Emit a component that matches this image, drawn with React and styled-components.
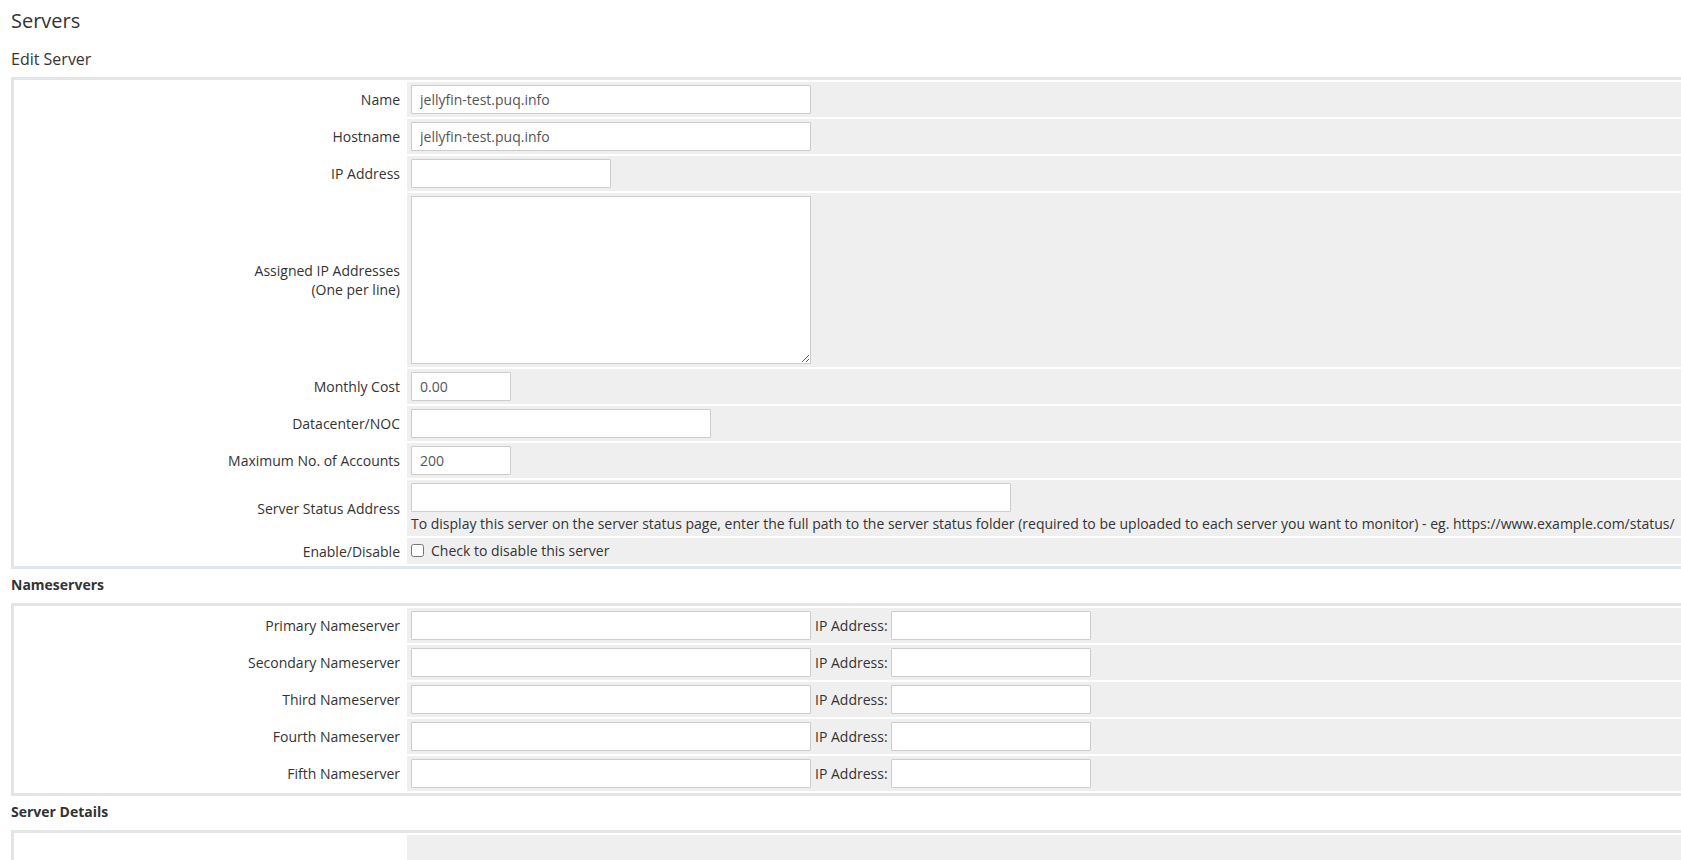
import React from "react";
import styled, { createGlobalStyle } from "styled-components";

const Global = createGlobalStyle`
  html, body { margin: 0; padding: 0; overflow: hidden; background: #fff; }
  body { font-family: "Open Sans", "Liberation Sans", sans-serif; color: #333; font-size: 14px; }
`;

const Page = styled.div`
  padding: 0 0 0 11px;
  width: 1720px;
`;
const Title = styled.h1`
  font-size: 20px; font-weight: 400; margin: 0; padding-top: 7px; line-height: 28px; color: #333;
`;
const SubTitle = styled.h2`
  font-size: 16px; font-weight: 400; margin: 0; padding-top: 12px; line-height: 24px; color: #333;
`;
const Heading = styled.div`
  font-size: 14px; font-weight: 700; line-height: 20px; margin: ${p => p.$top || 6}px 0 8px;
`;
const Box = styled.table`
  width: 100%;
  border: 3px solid #e2e6e8;
  border-spacing: 2px;
  margin-top: ${p => p.$top || 0}px;
  min-height: ${p => p.$minh || 0}px;
`;
const Label = styled.td`
  width: 381px; text-align: right; padding: 3px 5px 3px 3px; white-space: nowrap; background: #fff; line-height: 19px;
`;
const Field = styled.td`
  background: #efefef; padding: 3px 4px; line-height: 19px;
`;
const Input = styled.input`
  box-sizing: border-box; width: ${p => p.$w}px; height: 29px;
  border: 1px solid #ccc; border-radius: 1px; padding: 0 8px;
  font-family: inherit; font-size: 14px; color: #555; vertical-align: middle;
`;
const Area = styled.textarea`
  box-sizing: border-box; width: 400px; height: 168px; border: 1px solid #ccc; display: block; resize: vertical;
`;
const Help = styled.div` margin-top: 2px; `;
const Check = styled.label` display: inline-flex; align-items: center; gap: 7px; input { margin: 0; width: 13px; height: 13px; } `;
const IpLbl = styled.span` margin: 0 3px 0 4px; vertical-align: middle; `;

const rows = [
  ["Name", 400, "jellyfin-test.puq.info"],
  ["Hostname", 400, "jellyfin-test.puq.info"],
  ["IP Address", 200, ""],
];
const ns = ["Primary", "Secondary", "Third", "Fourth", "Fifth"];

export default function App() {
  return (
    <Page>
      <Global />
      <Title>Servers</Title>
      <SubTitle>Edit Server</SubTitle>
      <Box $top={6}>
        <tbody>
          {rows.map(([l, w, v]) => (
            <tr key={l}><Label>{l}</Label><Field><Input $w={w} defaultValue={v} /></Field></tr>
          ))}
          <tr><Label>Assigned IP Addresses<br />(One per line)</Label><Field><Area /></Field></tr>
          <tr><Label>Monthly Cost</Label><Field><Input $w={100} defaultValue="0.00" /></Field></tr>
          <tr><Label>Datacenter/NOC</Label><Field><Input $w={300} /></Field></tr>
          <tr><Label>Maximum No. of Accounts</Label><Field><Input $w={100} defaultValue="200" /></Field></tr>
          <tr><Label>Server Status Address</Label><Field><Input $w={600} /><Help>To display this server on the server status page, enter the full path to the server status folder (required to be uploaded to each server you want to monitor) - eg. https://www.example.com/status/</Help></Field></tr>
          <tr><Label>Enable/Disable</Label><Field><Check><input type="checkbox" />Check to disable this server</Check></Field></tr>
        </tbody>
      </Box>
      <Heading>Nameservers</Heading>
      <Box>
        <tbody>
          {ns.map(n => (
            <tr key={n}><Label>{n} Nameserver</Label><Field><Input $w={400} /><IpLbl>IP Address:</IpLbl><Input $w={200} /></Field></tr>
          ))}
        </tbody>
      </Box>
      <Heading>Server Details</Heading>
      <Box $minh={40}><tbody><tr><Label /><Field /></tr></tbody></Box>
    </Page>
  );
}
